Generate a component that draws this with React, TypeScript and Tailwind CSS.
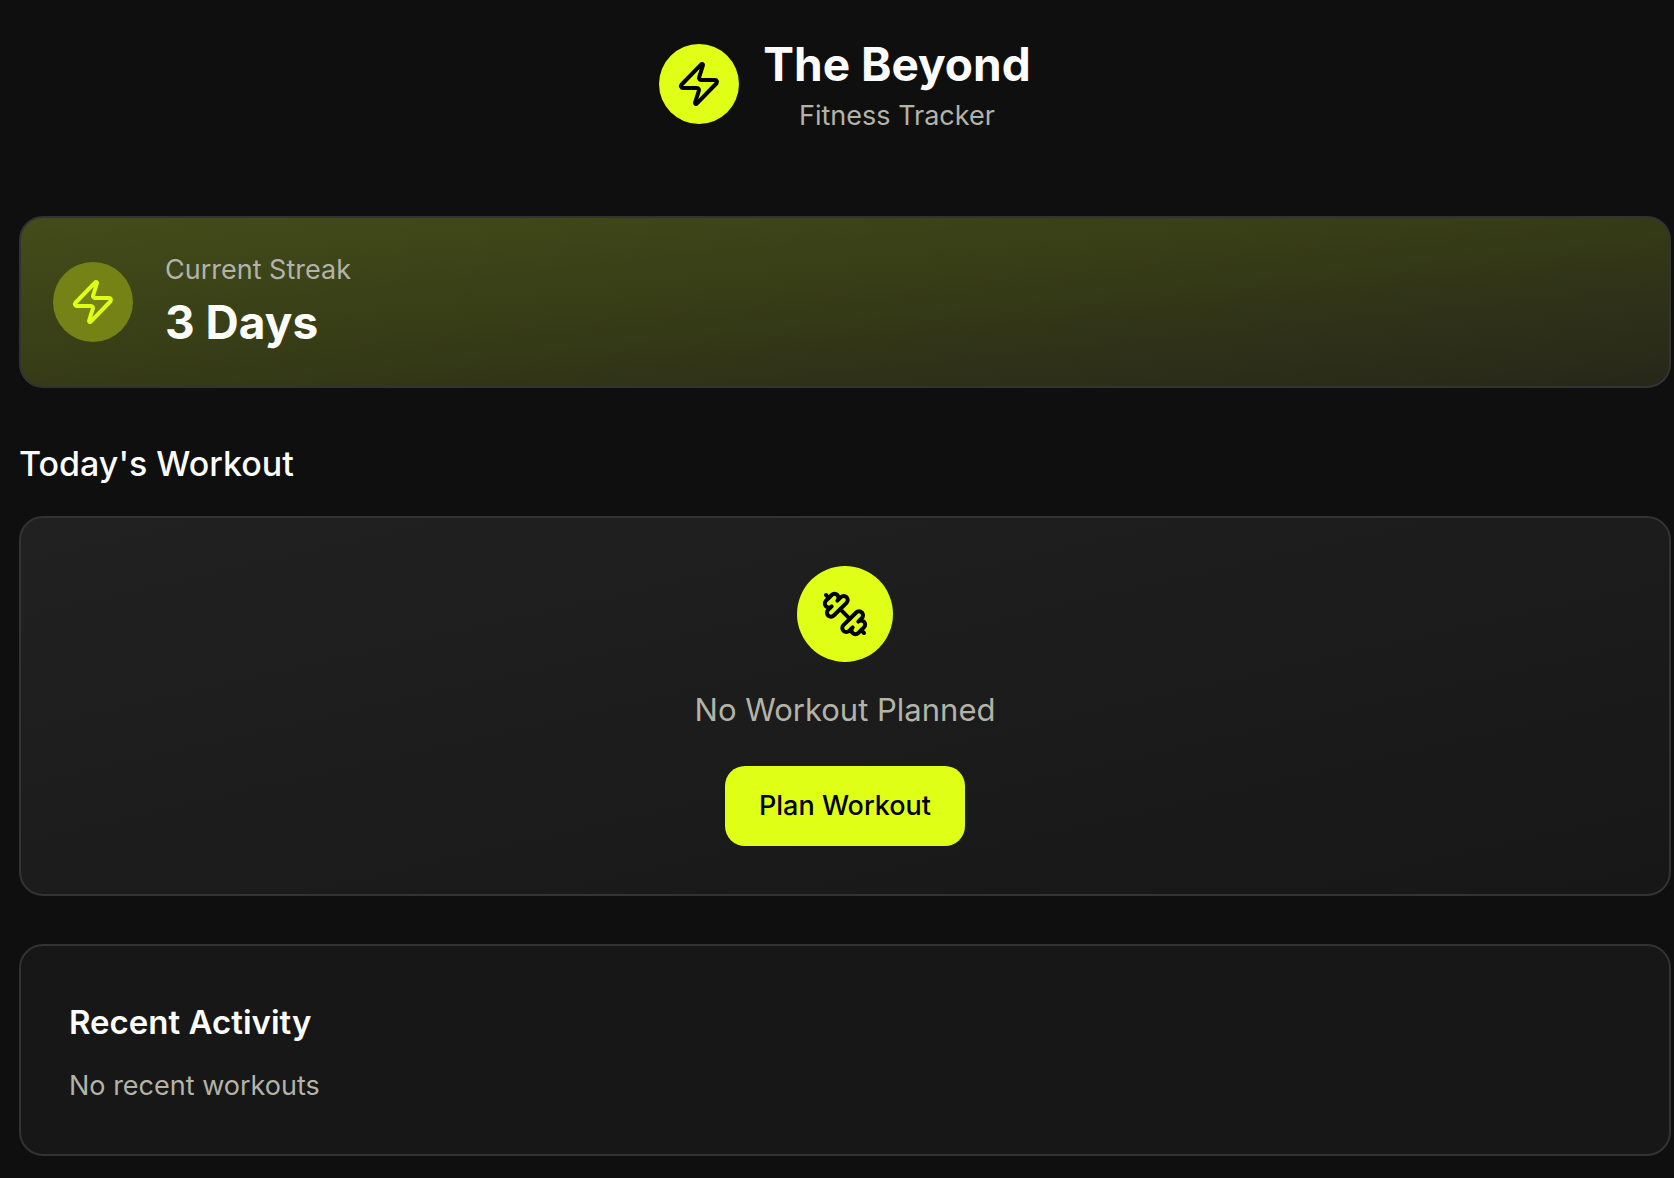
import { Zap } from 'lucide-react';

function DumbbellIcon() {
  return (
    <svg
      viewBox="0 0 24 24"
      className="size-12"
      fill="none"
      stroke="currentColor"
      strokeWidth="2"
      strokeLinecap="round"
      strokeLinejoin="round"
      aria-hidden="true"
    >
      <path d="M14.4 14.4 9.6 9.6" />
      <path d="M18.657 21.485a2 2 0 1 1-2.829-2.828l-1.767 1.768a2 2 0 1 1-2.829-2.829l6.364-6.364a2 2 0 1 1 2.829 2.829l-1.768 1.767a2 2 0 1 1 2.828 2.829z" />
      <path d="m21.5 21.5-1.4-1.4" />
      <path d="M3.9 3.9 2.5 2.5" />
      <path d="M6.404 12.768a2 2 0 1 1-2.829-2.829l1.768-1.767a2 2 0 1 1-2.828-2.829l2.828-2.828a2 2 0 1 1 2.829 2.828l1.767-1.768a2 2 0 1 1 2.829 2.829z" />
    </svg>
  );
}

function Header() {
  return (
    <header className="flex items-center justify-center gap-6 pt-8 pb-20">
      <div className="flex size-20 items-center justify-center rounded-full bg-[#e0ff17] text-black">
        <Zap className="size-12" />
      </div>
      <div className="text-center">
        <h1 className="text-[46px] leading-[64px] font-bold">The Beyond</h1>
        <p className="text-[27px] leading-[40px] text-[#b3b3a8]">Fitness Tracker</p>
      </div>
    </header>
  );
}

function StreakCard() {
  return (
    <section className="flex items-center gap-8 rounded-3xl border-2 border-[#333333] bg-linear-to-br/srgb from-[#444c1a] via-[#373d16] via-45% to-[#27271a] p-8">
      <div className="flex size-20 items-center justify-center rounded-full bg-[#758216] text-[#e0ff17]">
        <Zap className="size-12" />
      </div>
      <div>
        <p className="text-[27px] leading-[40px] text-[#b3b3ac]">Current Streak</p>
        <p className="text-[46px] leading-[64px] font-bold">3 Days</p>
      </div>
    </section>
  );
}

function TodaysWorkout() {
  return (
    <section className="mt-12">
      <h2 className="text-[34px] leading-[56px] font-medium">Today's Workout</h2>
      <div className="mt-6 flex flex-col items-center rounded-3xl border-2 border-[#333333] bg-linear-to-br/srgb from-[#212121] to-[#171717] p-12">
        <div className="flex size-24 items-center justify-center rounded-full bg-[#e0ff17] text-black">
          <DumbbellIcon />
        </div>
        <p className="mt-6 text-[31px] leading-[48px] text-[#b3b3a8]">No Workout Planned</p>
        <button
          type="button"
          className="mt-8 h-20 min-w-60 rounded-[20px] bg-[#e0ff17] px-8 text-[27px] leading-[40px] font-medium text-black"
        >
          Plan Workout
        </button>
      </div>
    </section>
  );
}

function RecentActivity() {
  return (
    <section className="mt-12 rounded-3xl border-2 border-[#333333] bg-[#171717] p-12">
      <h2 className="text-[33px] leading-[56px] font-semibold">Recent Activity</h2>
      <p className="mt-4 text-[27px] leading-[40px] text-[#b3b3a8]">No recent workouts</p>
    </section>
  );
}

export default function App() {
  return (
    <main className="min-h-screen bg-[#0f0f0f] pr-[3px] pb-5 pl-[19px] font-['Inter',sans-serif] text-[#fcfcfa] antialiased">
      <Header />
      <StreakCard />
      <TodaysWorkout />
      <RecentActivity />
    </main>
  );
}
